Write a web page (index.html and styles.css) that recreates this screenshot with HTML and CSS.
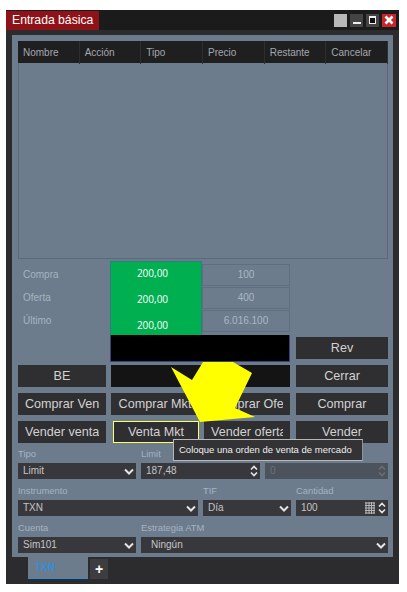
FILE: index.html
```html
<!DOCTYPE html>
<html lang="es">

<head>
  <meta charset="utf-8">
  <meta name="viewport" content="width=device-width, initial-scale=1">
  <title>Entrada básica</title>
  <link rel="stylesheet" href="styles.css">
</head>

<body>

  <div class="window">

    <!-- Title bar -->
    <div class="titlebar">
      <div class="title_tab">Entrada básica</div>
      <div class="win_buttons">
        <span class="win_btn win_plain"></span>
        <span class="win_btn win_min"></span>
        <span class="win_btn win_max"></span>
        <span class="win_btn win_close">
          <svg width="10" height="10" viewBox="0 0 10 10">
            <path d="M1.5 1.5 L8.5 8.5 M8.5 1.5 L1.5 8.5" stroke="#fff" stroke-width="2.6" fill="none" />
          </svg>
        </span>
      </div>
    </div>

    <div class="panel">

      <!-- Orders table -->
      <div class="orders">
        <div class="orders_head">
          <span>Nombre</span>
          <span>Acción</span>
          <span>Tipo</span>
          <span>Precio</span>
          <span>Restante</span>
          <span>Cancelar</span>
        </div>
      </div>

      <!-- Quote -->
      <div class="quote">
        <div class="quote_labels">
          <span>Compra</span>
          <span>Oferta</span>
          <span>Último</span>
        </div>
        <div class="quote_green">
          <span>200,00</span>
          <span>200,00</span>
          <span>200,00</span>
        </div>
        <div class="quote_cells">
          <span>100</span>
          <span>400</span>
          <span>6.016.100</span>
        </div>
        <div class="quote_black"></div>
        <div class="btn btn_rev"><span>Rev</span></div>
      </div>

      <!-- Order buttons -->
      <div class="buttons">
        <div class="btn"><span>BE</span></div>
        <div class="btn btn_wide btn_dark"></div>
        <div class="btn btn_end"><span>Cerrar</span></div>

        <div class="btn"><span>Comprar Ven</span></div>
        <div class="btn"><span>Comprar Mkt</span></div>
        <div class="btn"><span>Comprar Ofe</span></div>
        <div class="btn btn_end"><span>Comprar</span></div>

        <div class="btn"><span>Vender venta</span></div>
        <div class="btn btn_active"><span>Venta Mkt</span></div>
        <div class="btn"><span>Vender oferta</span></div>
        <div class="btn btn_end"><span>Vender</span></div>
      </div>

      <!-- Order form -->
      <div class="form_row form_row_a">
        <div class="field">
          <label>Tipo</label>
          <div class="input">Limit
            <svg class="chevron" width="10" height="7" viewBox="0 0 10 7">
              <path d="M1 1.5 L5 5.5 L9 1.5" stroke="#e4e4e4" stroke-width="2" fill="none" />
            </svg>
          </div>
        </div>
        <div class="field">
          <label>Limit</label>
          <div class="input">187,48
            <svg class="spin" width="8" height="12" viewBox="0 0 8 12">
              <path d="M1 4.5 L4 1.5 L7 4.5 M1 7.5 L4 10.5 L7 7.5" stroke="#e4e4e4" stroke-width="1.6" fill="none" />
            </svg>
          </div>
        </div>
        <div class="field">
          <label>&nbsp;</label>
          <div class="input input_off">0
            <svg class="spin" width="8" height="12" viewBox="0 0 8 12">
              <path d="M1 4.5 L4 1.5 L7 4.5 M1 7.5 L4 10.5 L7 7.5" stroke="#6d6d72" stroke-width="1.6" fill="none" />
            </svg>
          </div>
        </div>
      </div>

      <div class="form_row form_row_b">
        <div class="field">
          <label>Instrumento</label>
          <div class="input">TXN
            <svg class="chevron" width="10" height="7" viewBox="0 0 10 7">
              <path d="M1 1.5 L5 5.5 L9 1.5" stroke="#e4e4e4" stroke-width="2" fill="none" />
            </svg>
          </div>
        </div>
        <div class="field">
          <label>TIF</label>
          <div class="input">Día
            <svg class="chevron" width="10" height="7" viewBox="0 0 10 7">
              <path d="M1 1.5 L5 5.5 L9 1.5" stroke="#e4e4e4" stroke-width="2" fill="none" />
            </svg>
          </div>
        </div>
        <div class="field">
          <label>Cantidad</label>
          <div class="input">100
            <svg class="calc" width="10" height="12" viewBox="0 0 10 12">
              <path d="M0 1 H10 M0 3.5 H10 M0 6 H10 M0 8.5 H10 M0 11 H10 M1 0 V12 M4 0 V12 M6.5 0 V12 M9 0 V12" stroke="#b9b9b9"
                stroke-width="1" fill="none" />
            </svg>
            <svg class="spin" width="8" height="12" viewBox="0 0 8 12">
              <path d="M1 4.5 L4 1.5 L7 4.5 M1 7.5 L4 10.5 L7 7.5" stroke="#e4e4e4" stroke-width="1.6" fill="none" />
            </svg>
          </div>
        </div>
      </div>

      <div class="form_row form_row_c">
        <div class="field">
          <label>Cuenta</label>
          <div class="input">Sim101
            <svg class="chevron" width="10" height="7" viewBox="0 0 10 7">
              <path d="M1 1.5 L5 5.5 L9 1.5" stroke="#e4e4e4" stroke-width="2" fill="none" />
            </svg>
          </div>
        </div>
        <div class="field">
          <label>Estrategia ATM</label>
          <div class="input input_indent">Ningún
            <svg class="chevron" width="10" height="7" viewBox="0 0 10 7">
              <path d="M1 1.5 L5 5.5 L9 1.5" stroke="#e4e4e4" stroke-width="2" fill="none" />
            </svg>
          </div>
        </div>
      </div>

    </div>

    <!-- Bottom tabs -->
    <div class="tabs">
      <div class="tab">TXN</div>
      <div class="tab_add">+</div>
    </div>

    <!-- Yellow callout arrow and tooltip lie over the buttons -->
    <svg class="callout" width="95" height="70" viewBox="0 0 95 70">
      <polygon points="6,7 27,20 38,2 68,2 87,13 70,48 90,57 35,62" fill="#ffff00" />
    </svg>
    <div class="tooltip">Coloque una orden de venta de mercado</div>

  </div>

</body>

</html>
```

FILE: styles.css
```css
body {
  margin: 0;
  background-color: #fff;
  font-family: "Liberation Sans", Arial, sans-serif;
}

.window {
  position: relative;
  width: 393px;
  height: 574px;
  margin: 10px 0 0 6px;
  background-color: #2c2c2e;
  display: flex;
  flex-direction: column;
}

/* Title bar */
.titlebar {
  height: 20px;
  background-color: #1b1b1c;
  display: flex;
  justify-content: space-between;
  align-items: center;
  flex-shrink: 0;
}

.title_tab {
  width: 87px;
  height: 19px;
  margin-top: 1px;
  padding-left: 6px;
  background-color: #8f1218;
  color: #fff;
  font-size: 12.2px;
  line-height: 19px;
}

.win_buttons {
  display: flex;
  gap: 3px;
  margin-right: 3px;
}

.win_btn {
  width: 13px;
  height: 13px;
  display: flex;
  align-items: center;
  justify-content: center;
  background-color: #444;
}

.win_plain {
  background-color: #b8b8b8;
}

.win_min::after {
  content: "";
  width: 8px;
  height: 2px;
  margin-top: 5px;
  background-color: #eee;
}

.win_max::after {
  content: "";
  width: 5px;
  height: 5px;
  border: 1px solid #eee;
  border-top-width: 2px;
  background-color: #111;
}

.win_close {
  width: 14px;
  background-color: #c8262c;
}

/* Main panel */
.panel {
  margin: 5px 6px 0 6px;
  padding: 6px 5px 5px 6px;
  height: 522px;
  box-sizing: border-box;
  flex-shrink: 0;
  background-color: #6c7c8d;
}

.orders {
  height: 217px;
  border: 1px solid #5b6a7a;
  border-top: 0;
}

.orders_head {
  display: grid;
  grid-template-columns: repeat(6, 1fr);
  height: 22px;
  margin: 0 -1px;
  background-color: #1f1f20;
}

.orders_head span {
  padding-left: 5px;
  border-right: 1px solid #2e2e30;
  color: #a3a8ad;
  font-size: 10px;
  line-height: 23px;
}

/* Quote */
.quote {
  display: grid;
  grid-template-columns: 92px 92px 88px 92px;
  grid-template-rows: 74px 27px;
  margin-top: 2px;
}

.quote_labels {
  display: flex;
  flex-direction: column;
  gap: 9px;
  padding: 7px 0 0 5px;
  color: #a6b3c0;
  font-size: 10px;
  line-height: 14px;
}

.quote_green {
  display: flex;
  flex-direction: column;
  gap: 10px;
  box-sizing: border-box;
  padding: 3px 7px 0 0;
  border: 1px solid #2c7f83;
  border-bottom: 0;
  background-color: #00b050;
  color: #fff;
  font-family: "Open Sans", sans-serif;
  font-size: 10px;
  line-height: 16px;
  text-align: center;
}

.quote_cells {
  display: flex;
  flex-direction: column;
  gap: 1px;
  padding-top: 3px;
}

.quote_cells span {
  height: 22px;
  box-sizing: border-box;
  border: 1px solid #5f6f80;
  color: #aab7c4;
  font-size: 10px;
  line-height: 20px;
  text-align: center;
}

.quote_black {
  grid-column: 2 / 4;
  grid-row: 2;
  box-sizing: border-box;
  border: 1px solid #35447f;
  border-width: 0 1px 1px 1px;
  background-color: #000;
}

.btn {
  height: 22px;
  background-color: #2f2f31;
  color: #d2d2d2;
  font-size: 12.6px;
  line-height: 22px;
  text-align: center;
}

.btn span {
  display: block;
  margin: 0 7px;
  overflow: hidden;
  white-space: nowrap;
}

.btn_rev {
  grid-column: 4;
  grid-row: 2;
  width: 92px;
  margin: 2px 0 0 6px;
}

/* Button grid */
.buttons {
  display: grid;
  grid-template-columns: 88px 88px 86px 93px;
  grid-auto-rows: 22px;
  column-gap: 5px;
  row-gap: 6px;
  margin-top: 3px;
}

.btn_end {
  margin-left: 1px;
}

.btn_wide {
  grid-column: 2 / 4;
}

.btn_dark {
  background-color: #141414;
}

.btn_active {
  box-sizing: border-box;
  width: 86px;
  margin-left: 2px;
  border: 1px solid #ffff66;
  line-height: 20px;
}

/* Form */
.form_row {
  display: grid;
  column-gap: 5px;
  margin-top: 6px;
}

.form_row_a {
  grid-template-columns: 118px 119px 123px;
  margin-top: 5px;
}

.form_row_b {
  grid-template-columns: 180px 88px 92px;
}

.form_row_c {
  grid-template-columns: 118px 247px;
}

.field label {
  display: block;
  height: 15px;
  color: #a6b3c0;
  font-size: 9.4px;
  line-height: 11px;
}

.input {
  position: relative;
  height: 16px;
  padding-left: 5px;
  background-color: #38383c;
  color: #c4c4c4;
  font-size: 10px;
  line-height: 16px;
}

.input_off {
  background-color: #4d535c;
  color: #6d7076;
}

.input_indent {
  padding-left: 10px;
}

/* Icons inside the fields sit over the field's right edge */
.chevron {
  position: absolute;
  top: 5px;
  right: 2px;
}

.spin {
  position: absolute;
  top: 2px;
  right: 2px;
}

.calc {
  position: absolute;
  top: 2px;
  right: 13px;
}

/* Bottom tabs */
.tabs {
  display: flex;
  padding-left: 22px;
  gap: 2px;
  align-items: flex-start;
}

.tab {
  width: 60px;
  height: 22px;
  box-sizing: border-box;
  background-color: #6c7c8d;
  border-bottom: 1px solid #2f8fd8;
  color: #2f8fd8;
  font-size: 10px;
  font-weight: bold;
  line-height: 21px;
  padding-left: 7px;
}

.tab_add {
  width: 18px;
  height: 20px;
  margin-top: 2px;
  background-color: #3d3d40;
  color: #fff;
  font-size: 14px;
  font-weight: bold;
  line-height: 20px;
  text-align: center;
}

/* Overlays */
.callout {
  position: absolute;
  left: 159px;
  top: 350px;
}

.tooltip {
  position: absolute;
  left: 167px;
  top: 429px;
  width: 190px;
  height: 22px;
  box-sizing: border-box;
  padding-left: 5px;
  background-color: #333335;
  border: 1px solid #b8b8b8;
  border-right-color: #8c949c;
  color: #efefef;
  font-size: 9.5px;
  line-height: 20px;
  white-space: nowrap;
}
```
